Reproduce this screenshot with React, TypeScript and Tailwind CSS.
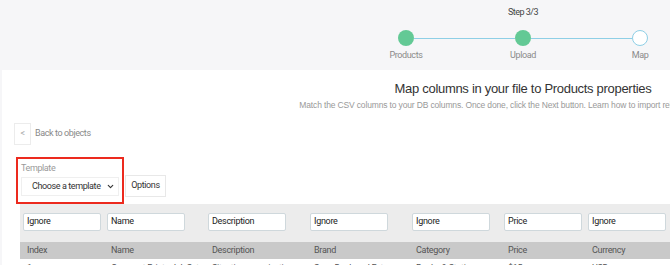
import { ChevronDown } from "lucide-react";

const mapping = ["Ignore", "Name", "Description", "Ignore", "Ignore", "Price", "Ignore"];
const headers = ["Index", "Name", "Description", "Brand", "Category", "Price", "Currency"];
const firstRow = ["1", "Compact Printer Ink Set", "Situation organization will", "Sony Dock and Ext", "Books & Stationery", "$15", "USD"];

const cols = "grid grid-cols-[84px_101px_102px_102px_92px_84px_120px]";

function Step({ label }: { label: string }) {
  return (
    <div className="w-[48px] text-center text-[9px] leading-[12px] tracking-[-0.4px] text-[#8a8a8a]">{label}</div>
  );
}

export default function App() {
  return (
    <div className="h-[265px] w-[670px] overflow-hidden bg-[#f6f6f8] font-['Roboto',sans-serif]">
      <div className="w-[1046px]">
        {/* stepper */}
        <div className="h-[70px]">
          <div className="ml-[382px] w-[282px] pt-[6px]">
            <p className="text-center text-[9px] leading-[12px] tracking-[-0.5px] text-[#444]">Step 3/3</p>
            <div className="mt-[12px] flex items-center px-[16px]">
              <span className="h-[16px] w-[16px] rounded-full bg-[#63c995]" />
              <span className="h-px flex-1 bg-[#8ecfe6]" />
              <span className="h-[16px] w-[16px] rounded-full bg-[#63c995]" />
              <span className="h-px flex-1 bg-[#8ecfe6]" />
              <span className="h-[16px] w-[16px] rounded-full border-[1.5px] border-[#8ecfe6] bg-white" />
            </div>
            <div className="mt-[3px] flex justify-between">
              <Step label="Products" />
              <Step label="Upload" />
              <Step label="Map" />
            </div>
          </div>
        </div>

        {/* panel */}
        <div className="ml-[2px] h-[195px] bg-white">
          <div className="w-[1042px] pt-[10px] text-center font-['Liberation_Sans',Arial,sans-serif]">
            <h1 className="text-[13px] leading-[18px] tracking-[-0.3px] text-[#333]">
              Map columns in your file to Products properties
            </h1>
            <p className="mt-[1px] text-[8.5px] leading-[12px] tracking-[-0.15px] text-[#999]">
              Match the CSV columns to your DB columns. Once done, click the Next button. Learn how to import related objects at once.
            </p>
          </div>

          <div className="ml-[12px] mt-[12px] flex items-center gap-[4px] text-[9px] tracking-[-0.4px]">
            <button className="flex h-[22px] w-[17px] items-center justify-center border border-[#ececec] text-[#aaa]">
              &lt;
            </button>
            <span className="text-[#888]">Back to objects</span>
          </div>

          <div className="ml-[14px] mt-[12px] flex items-end gap-px text-[9px] tracking-[-0.4px]">
            <div className="border-2 border-[#ec2a1e] px-[3px] pb-[6px] pt-[3px]">
              <div className="leading-[12px] text-[#9a9a9a]">Template</div>
              <div className="mt-[3px] flex h-[19px] w-[98px] items-center justify-between whitespace-nowrap border border-[#efefef] pl-[10px] pr-[3px] text-[#333]">
                Choose a template
                <ChevronDown size={9} strokeWidth={3} className="text-[#333]" />
              </div>
            </div>
            <button className="mb-[7px] h-[22px] w-[41px] border border-[#e8e8e8] text-[#333]">Options</button>
          </div>

          <div className="ml-[18px] bg-[#ececec] pt-[9px] text-[9px] tracking-[-0.3px]">
            <div className={cols}>
              {mapping.map((m, i) => (
                <div key={i} className="pl-[3px]">
                  <div className="flex h-[18px] w-[78px] items-center rounded-[2px] border border-[#cfd8dc] bg-white pl-[3px] text-[#222]">
                    {m}
                  </div>
                </div>
              ))}
            </div>
            <div className={`${cols} mt-[11px] h-[17px] items-center bg-[#c9c9c9] text-[#555]`}>
              {headers.map((h) => (
                <div key={h} className="pl-[7px]">{h}</div>
              ))}
            </div>
            <div className={`${cols} h-[20px] items-center bg-white text-[#555]`}>
              {firstRow.map((c, i) => (
                <div key={i} className="truncate pl-[7px] pr-[6px]">{c}</div>
              ))}
            </div>
          </div>
        </div>
      </div>
    </div>
  );
}
